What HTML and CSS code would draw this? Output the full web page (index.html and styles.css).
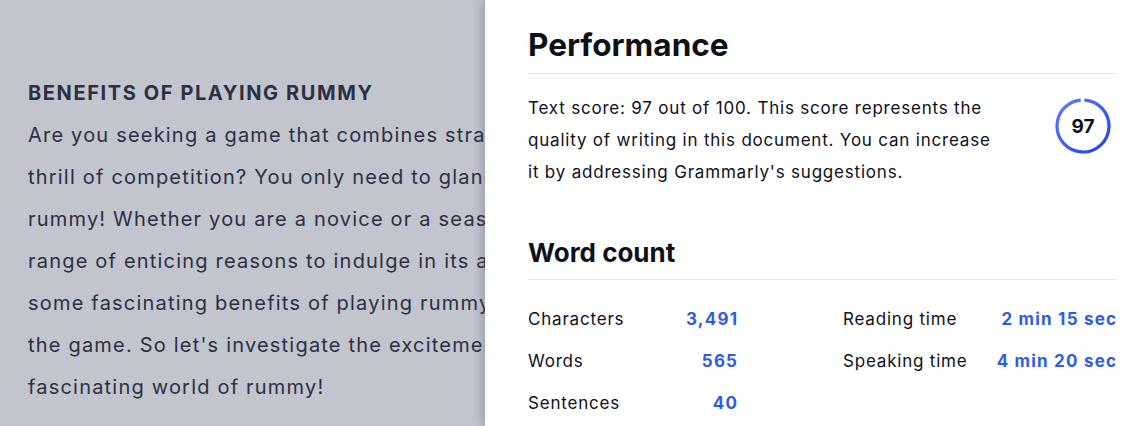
FILE: index.html
```html
<!DOCTYPE html>
<html>
<head>
<meta charset="utf-8">
<link rel="stylesheet" href="styles.css">
</head>
<body>
<div class="page">
  <div class="doc">
    <div class="doc-inner">
      <h2 class="doc-title">BENEFITS OF PLAYING RUMMY</h2>
      <p class="doc-text">Are you seeking a game that combines strategy, skill, and the<br>thrill of competition? You only need to glance at the game of<br>rummy! Whether you are a novice or a seasoned player, there's a<br>range of enticing reasons to indulge in its allure. Here are<br>some fascinating benefits of playing rummy that will make you love<br>the game. So let's investigate the excitement and dive into the<br>fascinating world of rummy!</p>
    </div>
  </div>
  <aside class="panel">
    <h1 class="panel-title">Performance</h1>
    <div class="score-row">
      <p class="score-text">Text score: 97 out of 100. This score represents the quality of writing in this document. You can increase it by addressing Grammarly's suggestions.</p>
      <div class="score-badge">
        <svg width="56" height="56" viewBox="0 0 56 56">
          <defs>
            <linearGradient id="g" x1="0" y1="1" x2="1" y2="0">
              <stop offset="0" stop-color="#1c3ff2"/>
              <stop offset="1" stop-color="#5d80f6"/>
            </linearGradient>
          </defs>
          <circle cx="28" cy="28" r="26" fill="none" stroke="url(#g)" stroke-width="3.2" stroke-dasharray="158.5 163.4" transform="rotate(-87 28 28)"/>
        </svg>
        <span class="score-num">97</span>
      </div>
    </div>
    <h1 class="panel-title wc">Word count</h1>
    <div class="stats">
      <div class="stat-col c1">
        <div class="stat"><span class="lbl">Characters</span><span class="val">3,491</span></div>
        <div class="stat"><span class="lbl">Words</span><span class="val">565</span></div>
        <div class="stat"><span class="lbl">Sentences</span><span class="val">40</span></div>
      </div>
      <div class="stat-col c2">
        <div class="stat"><span class="lbl">Reading time</span><span class="val">2 min 15 sec</span></div>
        <div class="stat"><span class="lbl">Speaking time</span><span class="val">4 min 20 sec</span></div>
      </div>
    </div>
  </aside>
</div>
</body>
</html>
```
FILE: styles.css
```css
* { box-sizing: border-box; }
html, body { margin: 0; padding: 0; }
body {
  width: 1122px;
  height: 426px;
  overflow: hidden;
  font-family: Inter, "Liberation Sans", sans-serif;
  background: #c2c5ce;
}
.page {
  display: flex;
  height: 426px;
}
.doc {
  flex: 0 0 485px;
  overflow: hidden;
  background: #c2c5ce;
}
.doc-inner {
  padding: 81px 0 0 28px;
  width: 900px;
}
.doc-title {
  margin: 0;
  font-size: 20px;
  font-weight: 700;
  letter-spacing: 1.6px;
  color: #2b3042;
  line-height: 24px;
}
.doc-text {
  margin: 9px 0 0;
  font-size: 20px;
  letter-spacing: 1.2px;
  line-height: 42px;
  color: #2b3042;
  white-space: nowrap;
}
.panel {
  flex: 1;
  background: #fff;
  padding: 24px 6px 0 43px;
  box-shadow: -4px 0 8px rgba(60, 66, 90, 0.25);
  color: #0e101a;
}
.panel-title {
  margin: 0;
  font-size: 31.5px;
  font-weight: 700;
  line-height: 42px;
  padding-bottom: 7px;
  border-bottom: 1px solid #e4e5ec;
  color: #0e101a;
}
.panel-title.wc {
  margin-top: 48px;
  font-size: 26px;
  line-height: 34px;
  padding-bottom: 9px;
}
.score-row {
  display: flex;
  justify-content: space-between;
  align-items: flex-start;
  padding-top: 18px;
}
.score-text {
  margin: 0;
  width: 468px;
  font-size: 17px;
  letter-spacing: 0.8px;
  line-height: 32px;
}
.score-badge {
  position: relative;
  width: 56px;
  height: 56px;
  margin-top: 6px;
  margin-right: 5px;
}
.score-badge svg { display: block; }
.score-num {
  position: absolute;
  inset: 0;
  display: flex;
  align-items: center;
  justify-content: center;
  font-size: 19px;
  font-weight: 700;
  color: #0e101a;
}
.stats {
  display: flex;
  gap: 106px;
  padding-top: 18px;
}
.stat-col.c1 { width: 209px; }
.stat-col.c2 { width: 273px; }
.stat {
  display: flex;
  justify-content: space-between;
  font-size: 17px;
  letter-spacing: 0.8px;
  line-height: 42px;
}
.val {
  color: #2f5ce0;
  font-weight: 700;
  letter-spacing: 1.2px;
  margin-right: -1.2px;
}
```
